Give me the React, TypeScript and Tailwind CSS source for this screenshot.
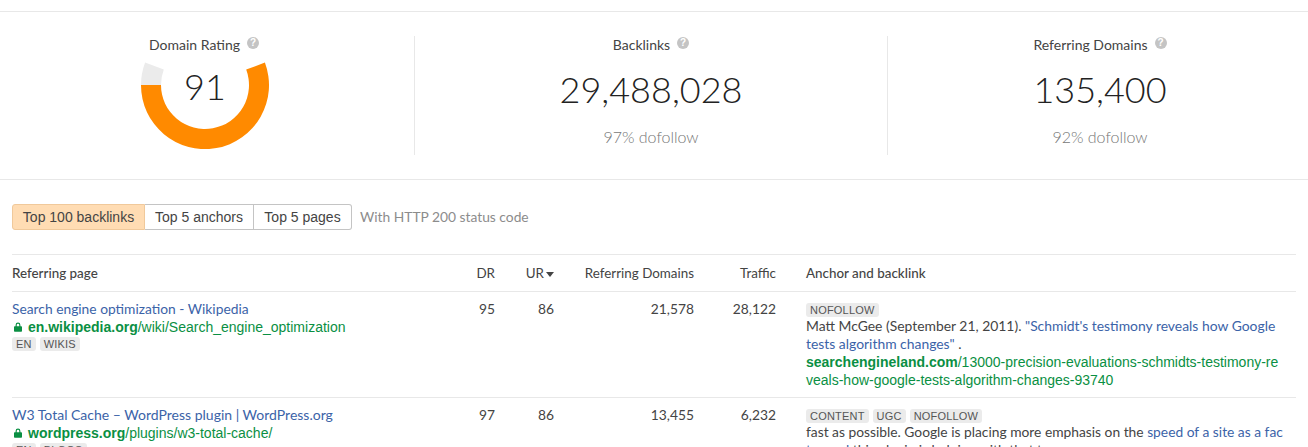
function HelpIcon() {
  return (
    <span className="ml-[7px] inline-flex h-3 w-3 -translate-y-[4px] items-center justify-center rounded-full bg-[#c4c4c4] font-['Liberation_Sans',sans-serif] text-[10px] leading-none font-bold text-white">
      ?
    </span>
  );
}

function Lock() {
  return (
    <svg viewBox="0 0 10 12" className="mr-[6px] ml-[2px] h-[10px] w-[8px] shrink-0 fill-[#0a8f43]">
      <path d="M2 5V3.5a3 3 0 0 1 6 0V5h1a1 1 0 0 1 1 1v5a1 1 0 0 1-1 1H1a1 1 0 0 1-1-1V6a1 1 0 0 1 1-1h1Zm1.4 0h3.2V3.5a1.6 1.6 0 0 0-3.2 0V5Z" />
    </svg>
  );
}

function Tag({ children }: { children: string }) {
  return (
    <span className="rounded-[3px] bg-[#ebebeb] px-[4px] font-['Liberation_Sans',sans-serif] text-[11px] leading-[14px] tracking-[0.2px] text-[#555]">
      {children}
    </span>
  );
}

function Gauge() {
  return (
    <div className="relative mt-[5px] h-[90px] w-[128px]">
      <svg viewBox="0 38 128 90" className="h-[90px] w-[128px]">
        <path d="M0 64 A64 64 0 0 1 4.1 41.6 L22.8 48.6 A44 44 0 0 0 20 64 Z" fill="#ebebeb" />
        <path d="M0 64 A64 64 0 1 0 123.9 41.6 L105.2 48.6 A44 44 0 1 1 20 64 Z" fill="#ff8a00" />
      </svg>
      <span className="absolute top-[4px] left-0 w-full text-center text-[36px] leading-[46px] font-light text-[#222]">91</span>
    </div>
  );
}

function Stat({ label, value, note, className }: { label: string; value: string; note: string; className: string }) {
  return (
    <div className={className}>
      <div className="text-[14px] leading-[18px] text-[#444]">
        {label}
        <HelpIcon />
      </div>
      <div className="mt-[12px] text-[36px] leading-[46px] font-light text-[#222]">{value}</div>
      <div className="mt-[15px] text-[16px] leading-[20px] font-light text-[#777]">{note}</div>
    </div>
  );
}

const columns = "grid grid-cols-[443px_40px_59px_140px_82px_520px]";

export default function App() {
  return (
    <div className="h-[447px] w-[1308px] overflow-hidden bg-white pt-[11px] font-['Lato',sans-serif] text-[13.8px] text-[#444]">
      {/* summary */}
      <div className="flex h-[169px] border-y border-[#e8e8e8] pt-[24px]">
        <div className="flex h-[119px] w-[414px] flex-col items-center pr-[4px]">
          <div className="mr-[2px] text-[14px] leading-[18px] text-[#444]">
            Domain Rating
            <HelpIcon />
          </div>
          <Gauge />
        </div>
        <Stat
          label="Backlinks"
          value="29,488,028"
          note="97% dofollow"
          className="flex h-[119px] w-[474px] flex-col items-center border-x border-[#e8e8e8]"
        />
        <Stat
          label="Referring Domains"
          value="135,400"
          note="92% dofollow"
          className="flex h-[119px] flex-1 flex-col items-center pl-[4px]"
        />
      </div>

      {/* tabs */}
      <div className="flex h-[74px] items-center px-3">
        <div className="flex h-[26px] rounded-[3px] font-['Liberation_Sans',sans-serif] text-[14px] leading-[24px] text-[#444]">
          <span className="w-[133px] rounded-l-[3px] border border-[#f0c99b] bg-[#ffdcb3] text-center">Top 100 backlinks</span>
          <span className="w-[109px] border-y border-r border-[#c4c4c4] text-center">Top 5 anchors</span>
          <span className="w-[98px] rounded-r-[3px] border-y border-r border-[#c4c4c4] text-center">Top 5 pages</span>
        </div>
        <span className="ml-[8px] text-[13.8px] text-[#8c8c8c]">With HTTP 200 status code</span>
      </div>

      {/* table */}
      <div className="mx-3 border-t border-[#e8e8e8]">
        <div className={`${columns} h-[37px] items-center border-b border-[#e8e8e8] pt-[1px] text-[13.4px] text-[#444]`}>
          <div className="font-medium">Referring page</div>
          <div className="text-right">DR</div>
          <div className="text-right">
            UR<span className="ml-[2px] inline-block translate-y-[-1px] border-x-[4px] border-t-[5px] border-x-transparent border-t-[#444]" />
          </div>
          <div className="text-right">Referring Domains</div>
          <div className="text-right">Traffic</div>
          <div className="pl-[30px] font-medium">Anchor and backlink</div>
        </div>

        <div className={`${columns} h-[106px] border-b border-[#e8e8e8] pt-[8px] leading-[18px]`}>
          <div>
            <div className="text-[#3b63a8]">Search engine optimization - Wikipedia</div>
            <div className="flex items-center font-['Liberation_Sans',sans-serif] text-[14px] text-[#0a8f43]">
              <Lock />
              <b>en.wikipedia.org</b>/wiki/Search_engine_optimization
            </div>
            <div className="mt-[1px] flex gap-[4px] leading-none">
              <Tag>EN</Tag>
              <Tag>WIKIS</Tag>
            </div>
          </div>
          <div className="text-right">95</div>
          <div className="text-right">86</div>
          <div className="text-right">21,578</div>
          <div className="text-right">28,122</div>
          <div className="pt-[2px] pl-[30px]">
            <div className="flex h-[15px] items-center">
              <Tag>NOFOLLOW</Tag>
            </div>
            <div className="w-[476px] text-[13.9px]">
              Matt McGee (September 21, 2011).{" "}
              <span className="text-[#3b63a8]">"Schmidt's testimony reveals how Google tests algorithm changes"</span> .
            </div>
            <div className="w-[476px] font-['Liberation_Sans',sans-serif] text-[14px] break-all text-[#0a8f43]">
              <b>searchengineland.com</b>/13000-precision-evaluations-schmidts-testimony-reveals-how-google-tests-algorithm-changes-93740
            </div>
          </div>
        </div>

        <div className={`${columns} pt-[8px] leading-[18px]`}>
          <div>
            <div className="text-[14px] text-[#3b63a8]">W3 Total Cache – WordPress plugin | WordPress.org</div>
            <div className="flex items-center font-['Liberation_Sans',sans-serif] text-[14px] text-[#0a8f43]">
              <Lock />
              <b>wordpress.org</b>/plugins/w3-total-cache/
            </div>
            <div className="mt-[1px] flex gap-[4px] leading-none">
              <Tag>EN</Tag>
              <Tag>BLOGS</Tag>
            </div>
          </div>
          <div className="text-right">97</div>
          <div className="text-right">86</div>
          <div className="text-right">13,455</div>
          <div className="text-right">6,232</div>
          <div className="pt-[2px] pl-[30px]">
            <div className="flex h-[15px] items-center gap-[4px]">
              <Tag>CONTENT</Tag>
              <Tag>UGC</Tag>
              <Tag>NOFOLLOW</Tag>
            </div>
            <div className="w-[477px] break-all">
              fast as possible. Google is placing more emphasis on the{" "}
              <span className="text-[#3b63a8]">speed of a site as a factor and</span> this plugin is helping with that too
            </div>
          </div>
        </div>
      </div>
    </div>
  );
}
